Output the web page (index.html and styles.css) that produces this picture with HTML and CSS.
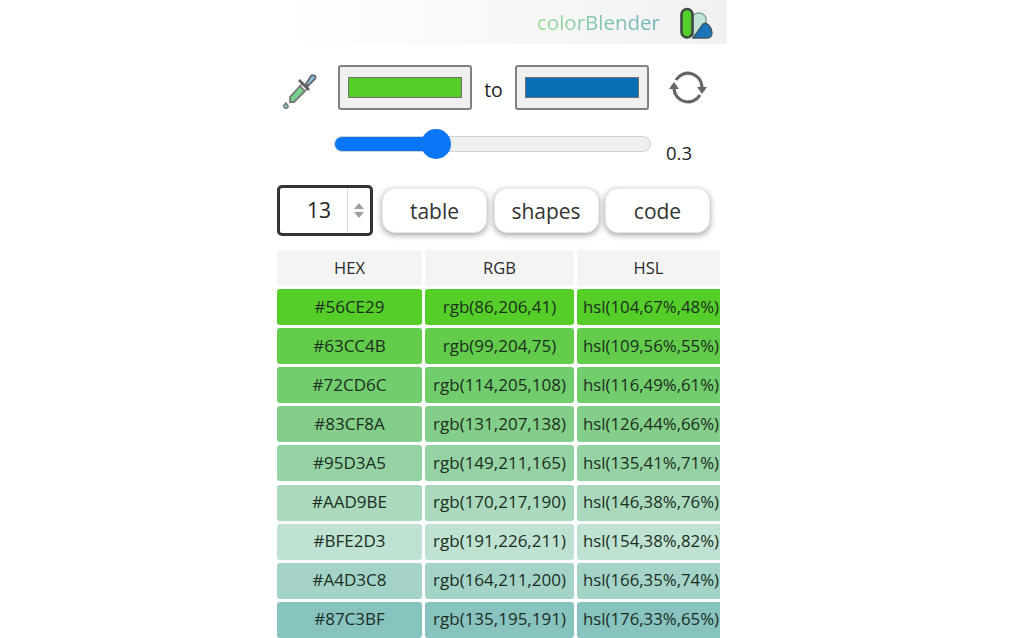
FILE: index.html
```html
<!DOCTYPE html>
<html>
<head>
    <title>colorBlender</title>
    <link rel="stylesheet" href="styles.css">
</head>
<body>
    <div class="app">
        <div class="top-bar">
            <span class="brand">colorBlender</span>
            <svg class="logo" width="34" height="34" viewBox="0 0 34 34">
                <path d="M14 10 C18 7 25 7 27 13 L27 21 L14 32 Z" fill="#c2e4d6" stroke="#7f9f98" stroke-width="1.3"/>
                <path d="M14 33 L24 19 C28 16 33 23 33 28 C33 31 31 33 28 33 Z" fill="#1b75bb" stroke="#3f5560" stroke-width="1.3"/>
                <rect x="2.5" y="4" width="11" height="28.5" rx="5.5" fill="#56ce29" stroke="#3d4a45" stroke-width="2.6"/>
            </svg>
        </div>

        <div class="picker-row">
            <svg class="dropper" width="36" height="38" viewBox="0 0 36 38">
                <path d="M8 26 L18 15 L23 20 L12 31 L8 31 Z" fill="#74d08c" stroke="#777" stroke-width="1.8"/>
                <path d="M18 15 L23 20 L26 17 L21 12 Z" fill="#e8f4f0" stroke="#777" stroke-width="1.2"/>
                <path d="M17 9 L27 19" stroke="#606060" stroke-width="2.6"/>
                <path d="M24 13 L29 5 C31 3 35 5 33 8 L26 15 Z" fill="#8cc4e8" stroke="#666" stroke-width="1.8"/>
                <path d="M4 32 C6 34 7 36 5 37 C3 38 1 36 2 34 Z" fill="#87c3bf" stroke="#777" stroke-width="1.4"/>
            </svg>
            <div class="swatch-box"><div class="swatch swatch-a"></div></div>
            <span class="to-label">to</span>
            <div class="swatch-box"><div class="swatch swatch-b"></div></div>
            <svg class="refresh" width="40" height="36" viewBox="0 0 40 36">
                <path d="M8 11 A14 14 0 0 1 34 18" fill="none" stroke="#666" stroke-width="3.2"/>
                <path d="M6 20 A14 14 0 0 0 32 26" fill="none" stroke="#666" stroke-width="3.2"/>
                <path d="M29 18 L39 18 L34 25 Z" fill="#666"/>
                <path d="M1 20 L11 20 L6 13 Z" fill="#666"/>
            </svg>
        </div>

        <div class="slider-row">
            <input class="slider" type="range" min="0" max="1" step="0.1" value="0.3">
            <span class="slider-value">0.3</span>
        </div>

        <div class="controls">
            <div class="count-box">
                <span class="count-value">13</span>
                <span class="spinner">
                    <span class="arrow-up"></span>
                    <span class="arrow-down"></span>
                </span>
            </div>
            <button class="view-button">table</button>
            <button class="view-button">shapes</button>
            <button class="view-button">code</button>
        </div>

        <div class="color-table">
            <div class="head">HEX</div><div class="head">RGB</div><div class="head">HSL</div>

            <div class="cell c1">#56CE29</div><div class="cell c1">rgb(86,206,41)</div><div class="cell c1 hsl">hsl(104,67%,48%)</div>
            <div class="cell c2">#63CC4B</div><div class="cell c2">rgb(99,204,75)</div><div class="cell c2 hsl">hsl(109,56%,55%)</div>
            <div class="cell c3">#72CD6C</div><div class="cell c3">rgb(114,205,108)</div><div class="cell c3 hsl">hsl(116,49%,61%)</div>
            <div class="cell c4">#83CF8A</div><div class="cell c4">rgb(131,207,138)</div><div class="cell c4 hsl">hsl(126,44%,66%)</div>
            <div class="cell c5">#95D3A5</div><div class="cell c5">rgb(149,211,165)</div><div class="cell c5 hsl">hsl(135,41%,71%)</div>
            <div class="cell c6">#AAD9BE</div><div class="cell c6">rgb(170,217,190)</div><div class="cell c6 hsl">hsl(146,38%,76%)</div>
            <div class="cell c7">#BFE2D3</div><div class="cell c7">rgb(191,226,211)</div><div class="cell c7 hsl">hsl(154,38%,82%)</div>
            <div class="cell c8">#A4D3C8</div><div class="cell c8">rgb(164,211,200)</div><div class="cell c8 hsl">hsl(166,35%,74%)</div>
            <div class="cell c9">#87C3BF</div><div class="cell c9">rgb(135,195,191)</div><div class="cell c9 hsl">hsl(176,33%,65%)</div>
        </div>
    </div>
</body>
</html>
```

FILE: styles.css
```css
html, body {
    margin: 0;
    height: 100%;
    overflow: hidden;
    background-color: #FFFFFF;
}
body {
    font-family: "Open Sans", "Noto Sans", sans-serif;
    color: #222222;
}
.app {
    width: 450px;
    margin-left: 277px;
}
.top-bar {
    height: 44px;
    display: flex;
    align-items: center;
    justify-content: flex-end;
    padding-right: 14px;
    background: linear-gradient(to right, #FFFFFF, #F1F1F1);
}
.brand {
    font-size: 20.5px;
    margin-right: 19px;
    background: linear-gradient(to right, #98DA94, #6EB2C2);
    -webkit-background-clip: text;
    background-clip: text;
    color: transparent;
}
.logo {
    display: block;
}
.picker-row {
    display: flex;
    align-items: center;
    height: 45px;
    margin-top: 21px;
    padding-left: 5px;
}
.dropper {
    margin-right: 20px;
    margin-top: 5px;
}
.swatch-box {
    width: 134px;
    height: 45px;
    box-sizing: border-box;
    border: 2px solid #808080;
    border-radius: 3px;
    background-color: #F0F0F0;
    padding: 10px 8px 0;
}
.swatch {
    height: 21px;
    box-sizing: border-box;
    border: 1px solid #707070;
}
.swatch-a {
    background-color: #56CE29;
}
.swatch-b {
    background-color: #0A6EB4;
}
.to-label {
    width: 43px;
    text-align: center;
    font-size: 19.5px;
    padding-top: 4px;
}
.refresh {
    margin-left: 19px;
    margin-top: -2px;
}
.slider-row {
    display: flex;
    height: 30px;
    margin-top: 18px;
    padding-left: 57px;
}
.slider {
    -webkit-appearance: none;
    appearance: none;
    width: 317px;
    height: 30px;
    margin: 1px 0 0;
    background: transparent;
}
.slider::-webkit-slider-runnable-track {
    height: 16px;
    box-sizing: border-box;
    border: 1px solid #CFCFCF;
    border-radius: 8px;
    background: linear-gradient(to right, #0B76F7 101px, #EFEFEF 101px);
}
.slider::-webkit-slider-thumb {
    -webkit-appearance: none;
    width: 30px;
    height: 30px;
    margin-top: -8px;
    border-radius: 50%;
    background-color: #0B76F7;
}
.slider-value {
    font-size: 18.5px;
    margin-left: 15px;
    padding-top: 12px;
}
.controls {
    display: flex;
    align-items: center;
    height: 51px;
    margin-top: 27px;
}
.count-box {
    width: 96px;
    height: 51px;
    box-sizing: border-box;
    border: 3px solid #333333;
    border-radius: 5px;
    display: flex;
    margin-right: 9px;
}
.count-value {
    flex: 1;
    text-align: right;
    padding-right: 16px;
    font-size: 21px;
    line-height: 45px;
}
.spinner {
    width: 22px;
    border-left: 1px solid #DDDDDD;
    display: flex;
    flex-direction: column;
    align-items: center;
    justify-content: center;
    gap: 3px;
}
.arrow-up {
    border-left: 5.5px solid transparent;
    border-right: 5.5px solid transparent;
    border-bottom: 6px solid #A0A0A0;
}
.arrow-down {
    border-left: 5.5px solid transparent;
    border-right: 5.5px solid transparent;
    border-top: 6px solid #A0A0A0;
}
.view-button {
    width: 105px;
    height: 45px;
    margin-right: 6.5px;
    padding: 0;
    border: 1px solid #EAEAEA;
    border-radius: 13px;
    background-color: #FFFFFF;
    box-shadow: 0 2px 6px rgba(0, 0, 0, 0.38);
    font-family: inherit;
    font-size: 21px;
    color: #333333;
}
.color-table {
    display: grid;
    width: 443px;
    grid-template-columns: 145px 149px 143px;
    grid-template-rows: 36px;
    grid-auto-rows: 36px;
    column-gap: 3px;
    row-gap: 3.1px;
    margin-top: 14px;
    overflow: hidden;
}
.head {
    display: flex;
    align-items: center;
    justify-content: center;
    background-color: #F4F4F4;
    font-size: 16.5px;
    color: #2A2A2A;
    padding-bottom: 2px;
}
.cell {
    display: flex;
    align-items: center;
    justify-content: center;
    border-radius: 3px;
    font-size: 17px;
    color: #1C2E22;
    white-space: nowrap;
    padding-bottom: 2px;
}
.hsl {
    justify-content: flex-start;
    padding-left: 6px;
    font-size: 16.8px;
    border-radius: 3px 0 0 3px;
}
.c1 { background-color: #56CE29; }
.c2 { background-color: #63CC4B; }
.c3 { background-color: #72CD6C; }
.c4 { background-color: #83CF8A; }
.c5 { background-color: #95D3A5; }
.c6 { background-color: #AAD9BE; }
.c7 { background-color: #BFE2D3; }
.c8 { background-color: #A4D3C8; }
.c9 { background-color: #87C3BF; }
```
